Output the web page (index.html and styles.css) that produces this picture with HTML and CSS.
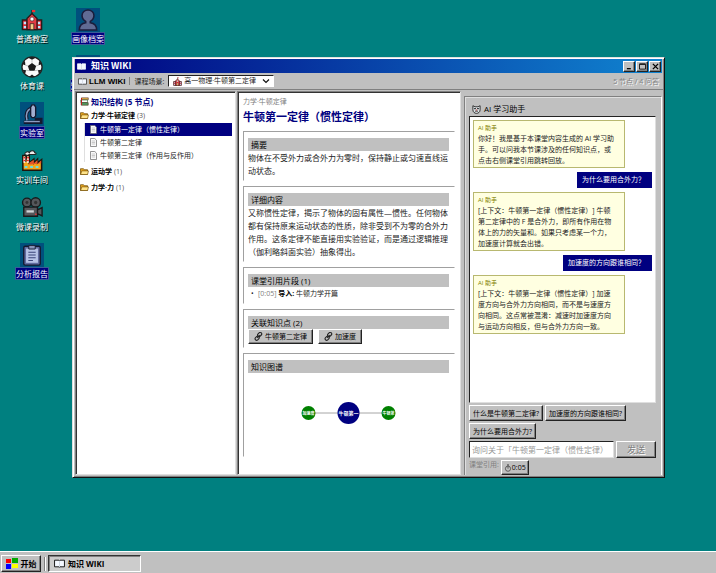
FILE: index.html
```html
<!DOCTYPE html>
<html lang="zh-CN">
<head>
<meta charset="utf-8">
<title>知识 WIKI</title>
<link rel="stylesheet" href="styles.css">
</head>
<body>
<svg class="defs" aria-hidden="true">
  <symbol id="book" viewBox="0 0 10 8"><path d="M.5 1h4l.5.5.5-.5h4v6h-4l-.5.5-.5-.5h-4z" fill="#f4f8ff" stroke="currentColor" stroke-width=".8"/><path d="M5 1.5v6" stroke="#b8c0cc" stroke-width=".5"/></symbol>
  <symbol id="folder" viewBox="0 0 9 8"><path d="M.5 7V1.2h3l.8 1h3.2V7z" fill="#e8a820" stroke="#6b4700" stroke-width=".7"/><path d="M.6 7l1.2-3.6h6.7L7.6 7z" fill="#ffe48a" stroke="#6b4700" stroke-width=".6"/></symbol>
  <symbol id="page" viewBox="0 0 8 9"><path d="M1 .5h4.3L7 2.2v6.3H1z" fill="#fbfbfb" stroke="#666" stroke-width=".7"/><path d="M2.2 3h3.5M2.2 4.5h3.5M2.2 6h3.5" stroke="#999" stroke-width=".5"/></symbol>
  <symbol id="link" viewBox="0 0 10 10"><g fill="none" stroke="#222" stroke-width="1.2"><rect x="3.8" y="1" width="5" height="3.4" rx="1.7" transform="rotate(-45 6.3 2.7)"/><rect x="1" y="5.2" width="5" height="3.4" rx="1.7" transform="rotate(-45 3.5 6.9)"/><path d="M3.6 6.4l2.8-2.8"/></g></symbol>
  <symbol id="school" viewBox="0 0 24 24"><path d="M12 1v5" stroke="#222" stroke-width="1.4"/><path d="M12 1h3.500v2.500H12z" fill="#e33"/><path d="M1.500 12h21v10.500h-21z" fill="#d92b35" stroke="#2b1a1a" stroke-width="1.500"/><path d="M6.500 22.500V10.500L12 5l5.500 5.500v12z" fill="#e33c43" stroke="#2b1a1a" stroke-width="1.500"/><circle cx="12" cy="11" r="2.200" fill="#fff" stroke="#333" stroke-width=".7"/><path d="M10 16h4v6.500h-4z" fill="#f5d08a" stroke="#2b1a1a" stroke-width=".8"/><path d="M3 14h2.500v2.500H3zM3 18.500h2.500V21H3zM18.500 14H21v2.500h-2.500zM18.500 18.500H21V21h-2.500z" fill="#bfe6ff"/></symbol>
</svg>

<main class="desktop">
  <nav class="icons" aria-label="桌面">
    <div class="icon-col">
      <a href="#" class="icon"><svg><use href="#school"/></svg><span>普通教室</span></a>
      <a href="#" class="icon"><svg viewBox="0 0 24 24"><circle cx="12" cy="12" r="11" fill="#fafafa" stroke="#222" stroke-width="1.500"/><path d="M12 7.500l4.500 3.300-1.700 5.200H9.200l-1.700-5.200zM8 1.900L12 4l4-2.100C13.500.7 10.500.7 8 1.900zM1.500 9l3.300 1L4.300 5.400C2.800 6.500 1.800 7.500 1.500 9zM22.500 9l-3.300 1 .5-4.600c1.500 1.100 2.500 2.100 2.800 3.600zM4.500 19.500l1-4-3.500-.500c.3 2 1.200 3.500 2.500 4.500zM19.500 19.500l-1-4 3.500-.500c-.3 2-1.200 3.500-2.500 4.500zM9 22.500l3-2.300 3 2.300c-2 .6-4 .6-6 0z" fill="#1b1b1b"/><path d="M12 4v3.500M4.800 10l2.700.8M19.200 10l-2.700.8M5.500 15.500l3.700.5M18.500 15.500l-3.700.5" fill="none" stroke="#999" stroke-width=".6"/></svg><span>体育课</span></a>
      <a href="#" class="icon selected"><svg viewBox="0 0 24 24"><path d="M11 6C6 8 5 13 6.500 18M3 21h18.500v-3H15" fill="none" stroke="#15182f" stroke-width="4"/><path d="M11 6C6 8 5 13 6.500 19" fill="none" stroke="#8b9cc2" stroke-width="1.600"/><path d="M3.500 19.500h17v1.500h-17z" fill="#8b9cc2"/><path d="M10.500 4.500L12 2h2.500L16 4.500V14l-1.500 2h-2.500L10.500 14z" fill="#a3aed0" stroke="#15182f" stroke-width="1.500"/></svg><span>实验室</span></a>
      <a href="#" class="icon"><svg viewBox="0 0 24 24"><path d="M2 22V6h3v7l1-7h3v8l5-4v4l4-4v4l4.500-3.500V22z" fill="#f4a51c" stroke="#20150d" stroke-width="1.700"/><path d="M2.700 7h2v7h-2zM6.800 7h1.700v7H6.300z" fill="#fff"/><path d="M2.700 8.500h2M2.700 11.500h2M6.700 8.500h2M6.500 11.500h2" stroke="#e22" stroke-width="1.500"/><path d="M9 14l5-3.500v4l4-3.500v4l4-3.500v3L9 16z" fill="#e5562a"/><path d="M4 5c0-3 4-4 5-2 1-3 6-3 6 0 2 0 2 2 0 2H9L7 6z" fill="#eee" stroke="#222" stroke-width="1.100"/><path d="M4 17.500h3v2H4zM10 17.500h3v2h-3zM16 17.500h3v2h-3z" fill="#69e0df"/></svg><span>实训车间</span></a>
      <a href="#" class="icon"><svg viewBox="0 0 24 24"><g fill="#55585c" stroke="#17191b" stroke-width="1.500"><circle cx="6.500" cy="6" r="4.800"/><circle cx="16" cy="6" r="5.200"/><path d="M3 11h15v10H3zM18 14l5-2.500v9L18 18z"/></g><circle cx="6.500" cy="6" r="1.600" fill="#333"/><circle cx="16" cy="6" r="1.800" fill="#333"/><path d="M6 14.500h8v2.500H6z" fill="#d0d3d6"/><path d="M15.500 18h1.500v1.500h-1.500z" fill="#e33"/></svg><span>微课录制</span></a>
      <a href="#" class="icon selected"><svg viewBox="0 0 24 24"><rect x="3" y="2.500" width="18" height="20.500" rx="1.500" fill="#626ba0" stroke="#15182f" stroke-width="1.500"/><path d="M5.500 5h13v15.500h-13z" fill="#b7c2e6"/><path d="M8.500 1.500h7v4h-7z" fill="#8993b8" stroke="#15182f"/><path d="M8 9h8M8 12h8M8 15h8M8 18h5" stroke="#3b4479" stroke-width="1.200"/></svg><span>分析报告</span></a>
    </div>
    <div class="icon-col">
      <a href="#" class="icon selected"><svg viewBox="0 0 24 24"><path d="M2.500 23c0-5 2.500-7.500 7-8v-1.500C7 12 5.500 9.500 5.500 7 5.500 3.500 8.500 1 12 1s6.500 2.500 6.500 6c0 2.500-1.500 5-4 6.500V15c4.500.5 7 3 7 8z" fill="#606b94" stroke="#1b1d3c" stroke-width="1.700"/></svg><span>画像档案</span></a>
      <a href="#" class="icon selected"><svg><use href="#book"/></svg><span>知识 WIKI</span></a>
    </div>
  </nav>

  <section class="window" aria-label="知识 WIKI">
    <header class="titlebar">
      <svg class="ico"><use href="#book"/></svg><h1>知识 WIKI</h1>
      <button aria-label="最小化"><svg viewBox="0 0 8 8"><path d="M1 6.500h4.500" stroke="#000" stroke-width="1.500"/></svg></button>
      <button aria-label="最大化"><svg viewBox="0 0 8 8"><path d="M.5 1.500h7v5.500h-7zM.5 1h7" fill="none" stroke="#000"/></svg></button>
      <button aria-label="关闭"><svg viewBox="0 0 8 8"><path d="M1 1l6 6M7 1L1 7" stroke="#000" stroke-width="1.500"/></svg></button>
    </header>
    <div class="toolbar">
      <svg class="ico"><use href="#book"/></svg><strong>LLM WIKI</strong><i></i>
      <label for="scene">课程场景:</label>
      <div class="select"><svg class="ico"><use href="#school"/></svg><select id="scene"><option>高一物理·牛顿第二定律</option></select><svg class="chev" viewBox="0 0 8 8"><path d="M1 2.500l3 3 3-3" fill="none" stroke="#111" stroke-width="1.200"/></svg></div>
      <span class="count">5 节点 / 4 问答</span>
    </div>

    <div class="panes">
      <aside class="pane tree">
        <h2><svg class="ico" viewBox="0 0 9 9"><path d="M1.500.8h6.800v2H1.500z" fill="#e9b94a" stroke="#533" stroke-width=".6"/><path d="M.7 3h6.800v2.500H.7z" fill="#fff" stroke="#263" stroke-width=".6"/><path d="M1.200 5.700h7v2.500h-7z" fill="#53a568" stroke="#421" stroke-width=".6"/><path d="M1.500 1v7" stroke="#b22"/></svg>知识结构 (5 节点)</h2>
        <h3><svg class="ico"><use href="#folder"/></svg>力学·牛顿定律 <small>(3)</small></h3>
        <ul>
          <li><a href="#" class="current"><svg class="ico"><use href="#page"/></svg>牛顿第一定律（惯性定律）</a></li>
          <li><a href="#"><svg class="ico"><use href="#page"/></svg>牛顿第二定律</a></li>
          <li><a href="#"><svg class="ico"><use href="#page"/></svg>牛顿第三定律（作用与反作用）</a></li>
        </ul>
        <h3><svg class="ico"><use href="#folder"/></svg>运动学 <small>(1)</small></h3>
        <h3><svg class="ico"><use href="#folder"/></svg>力学·力 <small>(1)</small></h3>
      </aside>

      <article class="pane article">
        <p class="crumb">力学·牛顿定律</p>
        <h2>牛顿第一定律（惯性定律）</h2>
        <section><h3>摘要</h3><p>物体在不受外力或合外力为零时，保持静止或匀速直线运动状态。</p></section>
        <section><h3>详细内容</h3><p>又称惯性定律，揭示了物体的固有属性—惯性。任何物体都有保持原来运动状态的性质，除非受到不为零的合外力作用。这条定律不能直接用实验验证，而是通过逻辑推理（伽利略斜面实验）抽象得出。</p></section>
        <section><h3>课堂引用片段 (1)</h3><ul><li><a href="#">[0:05]</a> <b>导入:</b> 牛顿力学开篇</li></ul></section>
        <section><h3>关联知识点 (2)</h3><div class="related"><button><svg class="ico"><use href="#link"/></svg>牛顿第二定律</button><button><svg class="ico"><use href="#link"/></svg>加速度</button></div></section>
        <section><h3>知识图谱</h3>
          <svg class="graph" viewBox="0 0 200 80"><path d="M60 40h80" stroke="#909090" stroke-width=".8"/><circle cx="60" cy="40" r="7" fill="#008000"/><circle cx="100" cy="40" r="11" fill="#000080"/><circle cx="140" cy="40" r="7" fill="#008000"/><g><text class="small" x="60" y="42">加速度</text><text x="100" y="42">牛顿第一</text><text class="small" x="140" y="42">牛顿第</text></g></svg>
        </section>
      </article>

      <aside class="chat">
        <h2><svg class="ico" viewBox="0 0 10 10"><path d="M1 .8L3.300 2h3.400L9 .8v4.500C9 8 7 9.300 5 9.300S1 8 1 5.300z" fill="#dfe5e8" stroke="#222" stroke-width="1"/><path d="M2.500 4h1.700M5.800 4h1.700" stroke="#111" stroke-width="1.300"/><path d="M3.300 6.800h3.400" stroke="#222"/><path d="M4.500 5h1v1h-1z" fill="#d22"/></svg>AI 学习助手</h2>
        <div class="log">
          <div class="bot"><h4>AI 助手</h4><p>你好！我是基于本课堂内容生成的 AI 学习助手。可以问我本节课涉及的任何知识点，或点击右侧课堂引用跳转回放。</p></div>
          <p class="user">为什么要用合外力？</p>
          <div class="bot"><h4>AI 助手</h4><p>[上下文：牛顿第一定律（惯性定律）] 牛顿第二定律中的 F 是合外力，即所有作用在物体上的力的矢量和。如果只考虑某一个力，加速度计算就会出错。</p></div>
          <p class="user">加速度的方向跟谁相同？</p>
          <div class="bot"><h4>AI 助手</h4><p>[上下文：牛顿第一定律（惯性定律）] 加速度方向与合外力方向相同，而不是与速度方向相同。这点常被混淆：减速时加速度方向与运动方向相反，但与合外力方向一致。</p></div>
        </div>
        <div class="chips"><button>什么是牛顿第二定律?</button><button>加速度的方向跟谁相同?</button><button>为什么要用合外力?</button></div>
        <form class="ask"><input type="text" aria-label="提问" placeholder="询问关于「牛顿第一定律（惯性定律）"><button type="button" disabled>发送</button></form>
        <div class="refs"><span>课堂引用:</span><button><svg viewBox="0 0 8 8"><circle cx="4" cy="4.700" r="2.600" fill="none" stroke="#333" stroke-width=".7"/><path d="M3 .8h2M4 1v1.500M4 3v1.700" stroke="#333" stroke-width=".7"/></svg>0:05</button></div>
      </aside>
    </div>
  </section>
</main>

<footer class="taskbar">
  <button class="start"><svg viewBox="0 0 12 11"><path d="M0 1h5v4H0z" fill="#f00"/><path d="M6 0h6v5H6z" fill="#0a0"/><path d="M0 6h5v5H0z" fill="#00f"/><path d="M6 6h6v4H6z" fill="#ff0"/></svg>开始</button>
  <i></i>
  <button class="task"><svg class="ico"><use href="#book"/></svg>知识 WIKI</button>
</footer>
</body>
</html>
```
FILE: styles.css
```css
* { box-sizing: border-box; margin: 0; padding: 0; }
body {
  min-height: 100vh;
  display: flex;
  flex-direction: column;
  background: #008080;
  color: #222;
  font: 8px/13px "Open Sans", "Noto Sans CJK SC", sans-serif;
  text-spacing-trim: space-all;
  overflow: hidden;
}
a { color: inherit; text-decoration: none; }
ul { list-style: none; }
svg { display: block; flex: none; }
.defs { position: absolute; width: 0; height: 0; }
.ico { width: 9px; height: 9px; }
button {
  display: inline-flex;
  align-items: center;
  justify-content: center;
  font: 7px/11px "Open Sans", "Noto Sans CJK SC", sans-serif;
  color: #000;
  background: #c0c0c0;
  border: 1px solid;
  border-color: #fff #222 #222 #fff;
  box-shadow: inset -1px -1px #808080;
  white-space: nowrap;
}

.desktop { position: relative; flex: 1; }
.icons { display: flex; gap: 8px; padding: 8px; }
.icon-col { display: flex; flex-direction: column; gap: 2px; width: 48px; }
.icon { display: flex; flex-direction: column; align-items: center; gap: 1px; height: 45px; color: #fff; text-shadow: 1px 1px #000; }
.icon svg { width: 24px; height: 24px; padding: 1px; }
.icon span { line-height: 11px; white-space: nowrap; }
.icon.selected svg { background: #00507d; }
.icon.selected span { background: #000080; outline: 1px solid #3a5a98; text-shadow: none; }

.window {
  position: absolute;
  inset: 57px 51px 73px 72px;
  display: flex;
  flex-direction: column;
  padding: 1px;
  background: #c0c0c0;
  border: 1px solid;
  border-color: #dfdfdf #111 #111 #dfdfdf;
  box-shadow: inset 1px 1px #fff, inset -1px -1px #808080;
}
.titlebar {
  display: flex;
  align-items: center;
  height: 14px;
  margin: 0 1px;
  padding: 0 1px 0 2px;
  color: #fff;
  background: linear-gradient(90deg, #000080, #1084d0);
}
.titlebar h1 { flex: 1; padding-left: 5px; font: 700 9px/14px "Noto Sans CJK SC", sans-serif; }
.titlebar button { width: 12px; height: 11px; }
.titlebar button + button { margin-left: 1px; }
.titlebar button svg { width: 7px; height: 7px; }
.toolbar { display: flex; align-items: center; height: 17px; padding: 0 4px; border-bottom: 1px solid #808080; }
.toolbar strong { margin-left: 2px; font-family: "Liberation Sans", sans-serif; color: #000; }
.toolbar i { width: 1px; height: 8px; margin: 0 4px; background: #808080; }
.toolbar label { font-size: 7px; }
.select { display: flex; align-items: center; width: 106px; height: 12px; margin-left: 4px; padding: 0 3px 0 4px; background: #fff; border: 1px solid; border-color: #222 #fff #fff #222; }
.select select { flex: 1; min-width: 0; margin-left: 2px; appearance: none; border: 0; background: none; color: #222; font: 7px/10px "Open Sans", "Noto Sans CJK SC", sans-serif; }
.chev { width: 8px; height: 8px; }
.count { margin-left: auto; font-size: 7px; color: #808080; text-shadow: 1px 1px #fff; }

.panes { flex: 1; display: grid; grid-template-columns: 161px 1fr 200px; gap: 1px; padding: 1px; min-height: 0; }
.pane { background: #fff; border: 1px solid; border-color: #808080 #dfdfdf #dfdfdf #808080; box-shadow: inset 1px 1px #333; overflow: hidden; }
.tree { padding: 3px; }
.tree h2 { display: flex; align-items: center; gap: 2px; padding-left: 1px; font-size: 8px; line-height: 13px; color: #000080; }
.tree h3 { display: flex; align-items: center; gap: 2px; padding-left: 1px; font-size: 7px; line-height: 15px; color: #000; }
.tree h3 small { font-size: 7px; font-weight: 400; color: #555; }
.tree ul { margin: 0 0 2px 5px; border-left: 1px solid #dfdfdf; }
.tree ul ~ h3 { margin-bottom: 1px; }
.tree li a { display: flex; align-items: center; gap: 2px; padding-left: 4px; font-size: 7px; }
.tree li a.current { color: #fff; background: #000080; }

.article { padding: 5px; }
.article .crumb { font-size: 7px; line-height: 10px; color: #808080; }
.article h2 { margin-bottom: 4px; font-size: 11px; line-height: 20px; color: #000080; }
.article section { margin-bottom: 5px; padding: 6px 5px 3px 4px; border: 1px solid; border-color: #a0a0a0 #fff #fff #a0a0a0; }
.article h3 { padding-left: 3px; font-size: 8px; font-weight: 400; color: #000; background: #c0c0c0; }
.article li { padding-left: 10px; font-size: 7px; position: relative; }
.article li::before { content: "•"; position: absolute; left: 3px; }
.article li a { color: #808080; }
.article b { color: #000; }
.related { display: flex; gap: 5px; }
.related button { gap: 2px; height: 15px; padding: 0 5px; }
.graph { width: 100%; height: 80px; }
.graph text { fill: #fff; font-size: 5px; font-weight: 700; text-anchor: middle; }
.graph .small { font-size: 4px; }

.chat { display: flex; flex-direction: column; margin: 5px 0 0 2px; padding: 5px 5px 0 4px; border: 1px solid; border-color: #808080 #fff #808080 #808080; border-bottom: 0; box-shadow: inset 1px 1px #dfdfdf; min-height: 0; }
.chat h2 { display: flex; align-items: center; gap: 3px; padding-left: 3px; font-size: 8px; font-weight: 400; line-height: 14px; color: #000; }
.log { flex: 1; display: flex; flex-direction: column; align-items: flex-start; gap: 4px; padding: 3px; background: #fff; border: 1px solid; border-color: #222 #dfdfdf #dfdfdf #222; overflow: hidden; }
.bot { width: 152px; max-width: 100%; padding: 3px 8px 1px 4px; font-size: 7px; line-height: 11px; background: #ffffe1; border: 1px solid #b8b870; }
.bot h4 { margin-bottom: 1px; font-size: 6px; font-weight: 400; line-height: 8px; color: #808000; }
.user { align-self: flex-end; padding: 2px 7px 3px 5px; font-size: 7px; line-height: 11px; color: #fff; background: #000080; }
.chips { display: flex; flex-wrap: wrap; gap: 2px; margin-top: 2px; }
.chips button { height: 16px; padding: 0 3px; }
.ask { display: flex; gap: 2px; margin-top: 2px; }
.ask input { flex: 1; min-width: 0; height: 17px; padding: 0 2px; background: #fff; border: 1px solid; border-color: #222 #dfdfdf #dfdfdf #222; font: 8px/13px "Open Sans", "Noto Sans CJK SC", sans-serif; }
.ask input::placeholder { color: #999; }
.ask button { width: 40px; font-size: 9px; color: #808080; text-shadow: 1px 1px #fff; }
.refs { display: flex; gap: 2px; margin-top: 2px; font-size: 7px; line-height: 10px; color: #808080; }
.refs button { height: 15px; padding: 0 2px; }
.refs svg { width: 8px; height: 8px; }

.taskbar { display: flex; align-items: center; gap: 3px; height: 22px; padding: 2px 1px 0; background: #c0c0c0; border-top: 1px solid #fff; }
.taskbar button { height: 17px; font-size: 8px; font-weight: 700; gap: 3px; }
.start { width: 40px; }
.start svg { width: 12px; height: 11px; }
.taskbar i { width: 1px; height: 14px; background: #808080; box-shadow: 1px 0 #fff; }
.taskbar .task { width: 93px; justify-content: flex-start; padding-left: 5px; background: #ccc; border-color: #333 #fff #fff #333; box-shadow: inset 1px 1px #808080; }
.taskbar .ico { width: 11px; height: 11px; }
```
